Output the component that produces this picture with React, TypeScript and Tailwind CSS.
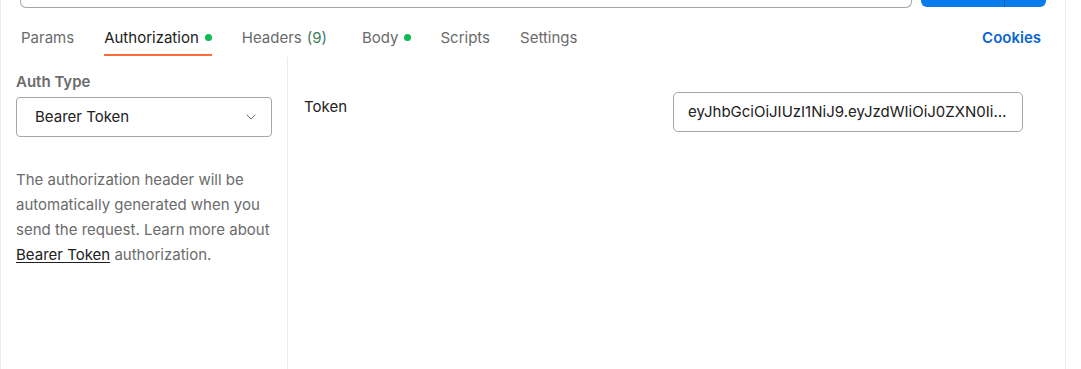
import React from "react";
import { ChevronDown } from "lucide-react";

const Dot = () => <span className="ml-[6px] inline-block h-[7px] w-[7px] rounded-full bg-[#0cbb52]" />;

export default function App() {
  return (
    <div
      className="relative h-[369px] w-[1081px] overflow-hidden bg-white text-[15px] leading-[20px]"
      style={{ fontFamily: "Inter, 'Noto Sans', sans-serif" }}
    >
      <div className="flex h-full w-[1066px] flex-col border-x border-[#ebebeb]">
        {/* top bar remnant */}
        <div className="flex h-[8px] shrink-0">
          <div className="ml-[19px] h-[8px] w-[892px] rounded-b-[6px] border-x border-b border-[#a6a6a6]" />
          <div className="ml-[9px] flex h-[7px] w-[125px] rounded-b-[6px] bg-[#097bed]">
            <div className="w-[84px] border-r border-[#0a62bd]" />
          </div>
        </div>
        {/* tabs */}
        <div className="flex h-[49px] shrink-0 items-stretch pl-[20px] pr-[24px]">
          <div className="flex items-center pt-[10px] text-[#6b6b6b]">Params</div>
          <div className="relative ml-[30px] flex items-center pt-[10px] text-[#212121]">
            Authorization
            <Dot />
            <div className="absolute bottom-[1px] left-0 right-0 h-[2px] bg-[#ff6c37]" />
          </div>
          <div className="ml-[30px] flex items-center pt-[10px] text-[#6b6b6b]">
            Headers <span className="ml-[5px] text-[#3d7a5c]">(9)</span>
          </div>
          <div className="ml-[35px] flex items-center pt-[10px] text-[#6b6b6b]">
            Body
            <Dot />
          </div>
          <div className="ml-[29px] flex items-center pt-[10px] text-[#6b6b6b]">Scripts</div>
          <div className="ml-[30px] flex items-center pt-[10px] text-[#6b6b6b]">Settings</div>
          <div className="ml-auto flex items-center pt-[10px] font-semibold text-[#0b65d0]">Cookies</div>
        </div>
        {/* content */}
        <div className="flex min-h-0 flex-1">
          <div className="w-[287px] shrink-0 border-r border-[#ebebeb] pl-[15px] pr-[12px]">
            <div className="mt-[15px] font-semibold text-[#6b6b6b]">Auth Type</div>
            <div className="mt-[5px] flex h-[40px] w-[256px] items-center justify-between rounded-[4px] border border-[#a6a6a6] pl-[18px] pr-[12px] text-[#212121]">
              <span>Bearer Token</span>
              <ChevronDown size={16} strokeWidth={1.5} className="text-[#6b6b6b]" />
            </div>
            <p className="mt-[30px] leading-[25px] text-[#6b6b6b]">
              The authorization header will be automatically generated when you send the request. Learn more about{" "}
              <span className="text-[#212121] underline underline-offset-2">Bearer Token</span> authorization.
            </p>
          </div>
          <div className="flex flex-1 items-start justify-between pl-[16px] pr-[42px] pt-[35px]">
            <div className="mt-[5px] text-[#212121]">Token</div>
            <div className="flex h-[40px] w-[350px] items-center rounded-[5px] border border-[#a6a6a6] pl-[14px] pr-[8px] text-[#212121]">
              <span className="truncate">eyJhbGciOiJIUzI1NiJ9.eyJzdWIiOiJ0ZXN0IiwiaWF0IjoxNzAwMDAwMDAwfQ</span>
            </div>
          </div>
        </div>
      </div>
    </div>
  );
}
